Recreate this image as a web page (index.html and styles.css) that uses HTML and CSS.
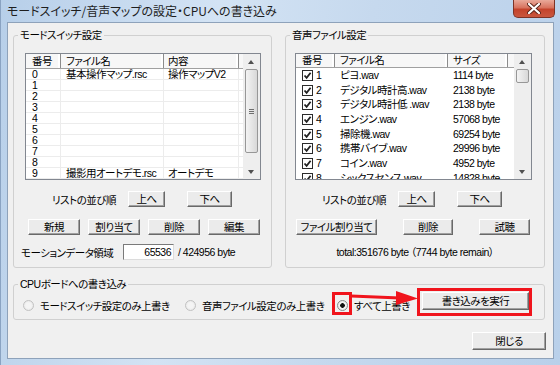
FILE: index.html
```html
<!DOCTYPE html>
<html lang="ja">
<head>
    <meta charset="UTF-8">
    <title>モードスイッチ/音声マップの設定・CPUへの書き込み</title>
    <link rel="stylesheet" href="styles.css">
</head>
<body>
<div class="window">
    <div class="titlebar">
        <div class="title">モードスイッチ/音声マップの設定・CPUへの書き込み</div>
        <div class="close-btn">
            <svg width="14" height="11" viewBox="0 0 14 11">
                <path d="M2 1 L12 10 M12 1 L2 10" stroke="#5a2318" stroke-width="4" stroke-linecap="round"/>
                <path d="M2 1 L12 10 M12 1 L2 10" stroke="#ffffff" stroke-width="2.2" stroke-linecap="round"/>
            </svg>
        </div>
    </div>

    <div class="client">
        <div class="top-row">
            <!-- モードスイッチ設定 -->
            <fieldset class="group">
                <legend>モードスイッチ設定</legend>
                <div class="group-body body-mode">
                    <div class="listview">
                        <div class="list-main">
                            <div class="list-header h-mode">
                                <div class="hcell m-no">番号</div>
                                <div class="hcell m-name">ファイル名</div>
                                <div class="hcell m-desc">内容</div>
                            </div>
                            <div class="row grid"><span class="cell m-no">0</span><span class="cell m-name">基本操作マップ.rsc</span><span class="cell m-desc">操作マップV2</span></div>
                            <div class="row grid"><span class="cell m-no">1</span><span class="cell m-name"></span><span class="cell m-desc"></span></div>
                            <div class="row grid"><span class="cell m-no">2</span><span class="cell m-name"></span><span class="cell m-desc"></span></div>
                            <div class="row grid"><span class="cell m-no">3</span><span class="cell m-name"></span><span class="cell m-desc"></span></div>
                            <div class="row grid"><span class="cell m-no">4</span><span class="cell m-name"></span><span class="cell m-desc"></span></div>
                            <div class="row grid"><span class="cell m-no">5</span><span class="cell m-name"></span><span class="cell m-desc"></span></div>
                            <div class="row grid"><span class="cell m-no">6</span><span class="cell m-name"></span><span class="cell m-desc"></span></div>
                            <div class="row grid"><span class="cell m-no">7</span><span class="cell m-name"></span><span class="cell m-desc"></span></div>
                            <div class="row grid"><span class="cell m-no">8</span><span class="cell m-name"></span><span class="cell m-desc"></span></div>
                            <div class="row grid"><span class="cell m-no">9</span><span class="cell m-name">撮影用オートデモ.rsc</span><span class="cell m-desc">オートデモ</span></div>
                        </div>
                        <div class="scrollbar">
                            <div class="sb-arrow up"></div>
                            <div class="sb-track"><div class="sb-thumb thumb-long"><span class="grip"></span></div></div>
                            <div class="sb-arrow down"></div>
                        </div>
                    </div>

                    <div class="sort-row">
                        <span class="sort-label">リストの並び順</span>
                        <button class="btn btn-up">上へ</button>
                        <button class="btn btn-down">下へ</button>
                    </div>

                    <div class="btn-row mode-btns">
                        <button class="btn btn-w52">新規</button>
                        <button class="btn btn-w52">割り当て</button>
                        <button class="btn btn-w52">削除</button>
                        <button class="btn btn-w52">編集</button>
                    </div>

                    <div class="motion-row">
                        <span class="motion-label">モーションデータ領域</span>
                        <span class="textbox">65536</span>
                        <span class="motion-total">/ 424956 byte</span>
                    </div>
                </div>
            </fieldset>

            <!-- 音声ファイル設定 -->
            <fieldset class="group">
                <legend>音声ファイル設定</legend>
                <div class="group-body body-sound">
                    <div class="listview">
                        <div class="list-main">
                            <div class="list-header h-sound">
                                <div class="hcell s-no">番号</div>
                                <div class="hcell s-name">ファイル名</div>
                                <div class="hcell s-size">サイズ</div>
                            </div>
                            <div class="row tall"><span class="cell s-no"><i class="check"></i>1</span><span class="cell s-name">ピヨ.wav</span><span class="cell s-size">1114 byte</span></div>
                            <div class="row tall"><span class="cell s-no"><i class="check"></i>2</span><span class="cell s-name">デジタル時計高.wav</span><span class="cell s-size">2138 byte</span></div>
                            <div class="row tall"><span class="cell s-no"><i class="check"></i>3</span><span class="cell s-name">デジタル時計低 .wav</span><span class="cell s-size">2138 byte</span></div>
                            <div class="row tall"><span class="cell s-no"><i class="check"></i>4</span><span class="cell s-name">エンジン.wav</span><span class="cell s-size">57068 byte</span></div>
                            <div class="row tall"><span class="cell s-no"><i class="check"></i>5</span><span class="cell s-name">掃除機.wav</span><span class="cell s-size">69254 byte</span></div>
                            <div class="row tall"><span class="cell s-no"><i class="check"></i>6</span><span class="cell s-name">携帯バイブ.wav</span><span class="cell s-size">29996 byte</span></div>
                            <div class="row tall"><span class="cell s-no"><i class="check"></i>7</span><span class="cell s-name">コイン.wav</span><span class="cell s-size">4952 byte</span></div>
                            <div class="row tall"><span class="cell s-no"><i class="check"></i>8</span><span class="cell s-name">シックスセンス.wav</span><span class="cell s-size">14828 byte</span></div>
                        </div>
                        <div class="scrollbar">
                            <div class="sb-arrow up"></div>
                            <div class="sb-track"><div class="sb-thumb thumb-short"></div></div>
                            <div class="sb-arrow down"></div>
                        </div>
                    </div>

                    <div class="sort-row">
                        <span class="sort-label">リストの並び順</span>
                        <button class="btn btn-up">上へ</button>
                        <button class="btn btn-down">下へ</button>
                    </div>

                    <div class="btn-row sound-btns">
                        <button class="btn btn-assign">ファイル割り当て</button>
                        <button class="btn btn-w50">削除</button>
                        <button class="btn btn-w51">試聴</button>
                    </div>

                    <div class="total-row">total:351676 byte （7744 byte remain）</div>
                </div>
            </fieldset>
        </div>

        <!-- CPUボードへの書き込み -->
        <fieldset class="group group-cpu">
            <legend>CPUボードへの書き込み</legend>
            <div class="group-body body-cpu">
                <label class="radio r-mode"><i class="radio-dot"></i>モードスイッチ設定のみ上書き</label>
                <label class="radio r-sound"><i class="radio-dot"></i>音声ファイル設定のみ上書き</label>
                <label class="radio r-all"><i class="radio-dot checked"></i>すべて上書き</label>
                <button class="btn btn-write">書き込みを実行</button>

                <!-- red annotations -->
                <div class="mark mark-radio"></div>
                <div class="mark mark-button"></div>
                <svg class="mark-arrow" width="72" height="22" viewBox="0 0 72 22">
                    <path d="M1 10 L50 12" stroke="#f0141c" stroke-width="3.2"/>
                    <polygon points="46,5 68,12.5 46,19" fill="#f0141c"/>
                </svg>
            </div>
        </fieldset>

        <div class="footer-row">
            <button class="btn btn-close">閉じる</button>
        </div>
    </div>
</div>
</body>
</html>
```

FILE: styles.css
```css
* {
    box-sizing: border-box;
}

body {
    margin: 0;
    width: 560px;
    height: 365px;
    overflow: hidden;
    font-family: "Liberation Sans", "Noto Sans CJK JP", sans-serif;
    font-size: 10.5px;
    letter-spacing: -0.5px;
    font-feature-settings: "palt";
    color: #000;
    background: #bcd2eb;
}

.window {
    height: 365px;
    display: flex;
    flex-direction: column;
    background: linear-gradient(100deg, #b7cfe9 0%, #d3e3f4 35%, #c6d9ee 60%, #b9d0ea 100%);
    border-left: 1px solid #8aa3c2;
}

/* title bar */
.titlebar {
    height: 22px;
    display: flex;
    align-items: flex-start;
    justify-content: space-between;
    padding-left: 6px;
}

.title {
    font-family: "Noto Sans CJK JP", sans-serif;
    font-size: 12px;
    letter-spacing: 0;
    line-height: 22px;
    color: #1e1e1e;
}

.close-btn {
    width: 42px;
    height: 18px;
    margin-right: 5px;
    display: flex;
    align-items: center;
    justify-content: center;
    border: 1px solid #7d3326;
    border-top: none;
    border-radius: 0 0 5px 5px;
    background: linear-gradient(to bottom, #e9a99a 0%, #d8735f 45%, #c4432c 55%, #c9573f 100%);
}

/* client area */
.client {
    flex: 1;
    margin: 0 6px 6px 6px;
    background: #f0f0f0;
    border: 1px solid #8ea2ba;
    padding: 5px 7px 0 5px;
    display: flex;
    flex-direction: column;
}

.top-row {
    display: flex;
    gap: 13px;
}

/* group box */
.group {
    margin: 0;
    padding: 0;
    min-width: 0;
    border: 1px solid #d0d0d0;
    border-radius: 3px;
}

.group legend {
    margin-left: 4px;
    padding: 0 2px;
    line-height: 14px;
    font-size: 10.5px;
}

.group-body {
    display: flex;
    flex-direction: column;
}

.top-row .group:first-child {
    width: 259px;
}

.top-row .group:last-child {
    width: 260px;
}

.body-mode {
    padding: 11px 10px 7px 11px;
}

.body-sound {
    padding: 11px 12px 7px 9px;
}

/* list view */
.listview {
    height: 127px;
    display: flex;
    background: #fff;
    border: 1px solid #828790;
}

.list-main {
    flex: 1;
    overflow: hidden;
}

.list-header {
    display: flex;
    background: #f7f7f7;
    border-bottom: 1px solid #a0a0a0;
}

.h-mode {
    height: 15px;
}

.h-sound {
    height: 14px;
}

.hcell {
    line-height: 14px;
    border-right: 1px solid #8c8c8c;
    box-shadow: inset -2px 0 0 #ffffff;
    white-space: nowrap;
}

.h-sound .hcell {
    line-height: 13px;
}

.row {
    display: flex;
    white-space: nowrap;
}

.row.grid {
    height: 11px;
    line-height: 10px;
    border-bottom: 1px solid #ececec;
}

.row.grid .cell {
    border-right: 1px solid #ececec;
}

.row.tall {
    height: 14.7px;
    line-height: 14.7px;
}

.cell {
    display: flex;
    align-items: center;
    overflow: hidden;
}

.m-no {
    width: 35px;
    padding-left: 6px;
}

.m-name {
    width: 103px;
    padding-left: 5px;
}

.m-desc {
    width: 75px;
    padding-left: 4px;
}

.s-no {
    width: 39px;
    padding-left: 6px;
}

.s-name {
    width: 113px;
    padding-left: 5px;
}

.s-size {
    width: 60px;
    padding-left: 5px;
}

.check {
    width: 11px;
    height: 11px;
    margin-right: 3px;
    border: 1px solid #2b2b2b;
    background: #fff url("data:image/svg+xml;utf8,<svg xmlns='http://www.w3.org/2000/svg' width='9' height='9'><path d='M1.5 4.5 L3.6 6.8 L7.6 1.8' fill='none' stroke='%23222' stroke-width='1.8'/></svg>") no-repeat center;
}

/* scroll bar */
.scrollbar {
    width: 17px;
    display: flex;
    flex-direction: column;
    background: #eeeeee;
}

.sb-arrow {
    height: 15px;
    position: relative;
}

.sb-arrow::after {
    content: "";
    position: absolute;
    left: 5px;
    top: 6px;
    border-left: 3.5px solid transparent;
    border-right: 3.5px solid transparent;
}

.sb-arrow.up::after {
    border-bottom: 4px solid #505050;
}

.sb-arrow.down::after {
    border-top: 4px solid #505050;
}

.sb-track {
    flex: 1;
    padding: 0 2px;
}

.sb-thumb {
    border: 1px solid #979797;
    border-radius: 2px;
    background: linear-gradient(to right, #f3f3f3, #e6e6e6 50%, #d8d8d8);
    display: flex;
    align-items: center;
    justify-content: center;
}

.thumb-long {
    height: 84px;
}

.thumb-short {
    height: 14px;
}

.grip {
    width: 5px;
    height: 5px;
    border-top: 1px solid #6e6e6e;
    border-bottom: 1px solid #6e6e6e;
    background: linear-gradient(#6e6e6e, #6e6e6e) no-repeat center / 5px 1px;
}

/* buttons */
.btn {
    font-family: inherit;
    font-size: 10.5px;
    letter-spacing: -0.5px;
    font-feature-settings: "palt";
    white-space: nowrap;
    height: 16px;
    padding: 0;
    line-height: 14px;
    color: #000;
    background: #ebebeb;
    border: 1px solid;
    border-color: #ffffff #696969 #696969 #ffffff;
    box-shadow: inset -1px -1px 0 #a0a0a0;
}

.sort-row {
    display: flex;
    align-items: center;
    margin-top: 11px;
    height: 16px;
}

.sort-label {
    width: 76px;
    margin-left: 27px;
}

.btn-up {
    width: 37px;
}

.btn-down {
    width: 45px;
    margin-left: 22px;
}

.btn-row {
    display: flex;
    margin-top: 12px;
}

.mode-btns {
    gap: 8px;
    margin-left: 3px;
}

.btn-w52 {
    width: 52px;
}

.sound-btns {
    gap: 26px;
    margin-left: 1px;
}

.btn-assign {
    width: 81px;
}

.btn-w50 {
    width: 50px;
}

.btn-w51 {
    width: 51px;
}

.motion-row {
    display: flex;
    align-items: center;
    margin-top: 9px;
    margin-left: -4px;
    height: 16px;
}

.motion-label {
    width: 102px;
}

.textbox {
    width: 51px;
    height: 16px;
    line-height: 14px;
    text-align: right;
    padding-right: 2px;
    background: #fff;
    border: 1px solid #a0a0a0;
    border-color: #7a7a7a #dcdcdc #dcdcdc #7a7a7a;
}

.motion-total {
    margin-left: 4px;
}

.total-row {
    margin-top: 9px;
    height: 16px;
    line-height: 16px;
    text-align: center;
    margin-left: -9px;
    margin-right: -12px;
}

/* CPU group */
.group-cpu {
    margin-top: 9px;
    margin-right: 1px;
}

.body-cpu {
    position: relative;
    height: 28px;
    flex-direction: row;
    align-items: center;
}

.radio {
    display: flex;
    align-items: center;
    height: 14px;
    white-space: nowrap;
}

.r-mode {
    width: 162px;
    margin-left: 9px;
}

.r-sound {
    width: 152px;
}

.r-all {
    width: 85px;
}

.radio-dot {
    width: 11px;
    height: 11px;
    margin-right: 6px;
    border-radius: 50%;
    border: 1px solid #c2c2c2;
    background: radial-gradient(circle, #f4f4f4 40%, #e2e2e2 100%);
}

.radio-dot.checked {
    border-color: #8a8a8a;
    background: radial-gradient(circle, #111 0, #111 2px, #f4f4f4 2.6px, #e2e2e2 100%);
}

.btn-write {
    width: 107px;
    height: 18px;
    align-self: flex-start;
    margin-top: 1px;
}

.mark {
    position: absolute;
    border: 3px solid #f0141c;
}

.mark-radio {
    left: 318px;
    top: 1px;
    width: 20px;
    height: 23px;
}

.mark-button {
    left: 403px;
    top: -3px;
    width: 115px;
    height: 28px;
}

.mark-arrow {
    position: absolute;
    left: 336px;
    top: -5px;
}

/* bottom */
.footer-row {
    display: flex;
    justify-content: flex-end;
    margin-top: 12px;
}

.btn-close {
    width: 74px;
    height: 18px;
}
```
